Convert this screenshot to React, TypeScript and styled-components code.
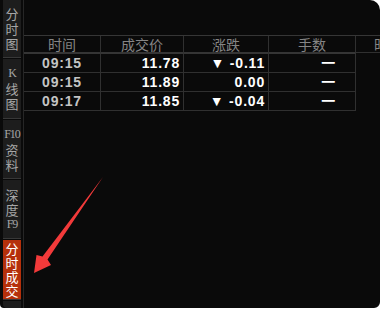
import * as React from 'react';
import styled, { createGlobalStyle } from 'styled-components';

const GlobalStyle = createGlobalStyle`
  html, body {
    margin: 0;
    padding: 0;
    background: #ffffff;
  }
`;

const Panel = styled.div`
  position: relative;
  display: flex;
  width: 380px;
  height: 308px;
  background: #0a0a0a;
  border-radius: 0 10px 6px 4px;
  overflow: hidden;
  font-family: 'Liberation Sans', 'Noto Sans CJK SC', sans-serif;
`;

const Sidebar = styled.div`
  display: flex;
  flex-direction: column;
  gap: 2px;
  width: 18px;
  padding: 0 2px 0 3px;
  border-right: 1px solid #262626;
`;

const Tab = styled.div<{ $active?: boolean; $h: number }>`
  display: flex;
  flex-direction: column;
  align-items: center;
  justify-content: center;
  height: ${p => p.$h}px;
  flex-shrink: 0;
  background: ${p => (p.$active ? '#b5300b' : '#1d1d1d')};
  color: ${p => (p.$active ? '#ffffff' : '#a6a6a6')};
  line-height: ${p => (p.$active ? 14 : 15)}px;
  box-shadow: 0 1px 0 #383838;
`;

const SideFill = styled.div`
  flex: 1;
  background: #1d1d1d;
  border-bottom-left-radius: 4px;
`;

const TabLine = styled.span<{ $latin?: boolean }>`
  display: block;
  font-family: ${p => (p.$latin ? "'Liberation Serif', serif" : "'Noto Sans CJK SC', sans-serif")};
  font-size: ${p => (p.$latin ? '12px' : '13px')};
  letter-spacing: ${p => (p.$latin ? '-1px' : '0')};
  white-space: nowrap;
`;

const Main = styled.div`
  flex: 1;
  min-width: 0;
  padding-top: 35px;
  overflow: hidden;
`;

const Table = styled.div`
  display: grid;
  grid-template-columns: 77px 83px 85px 87px 50px;
  width: max-content;
  border-top: 1px solid #363636;
`;

const HeadCell = styled.div<{ $last?: boolean }>`
  height: 16px;
  line-height: 17px;
  text-align: center;
  color: #858585;
  font-family: 'Noto Sans CJK SC', sans-serif;
  font-size: 14px;
  border-right: ${p => (p.$last ? 'none' : '1px solid #303030')};
  border-bottom: ${p => (p.$last ? '1px solid #303030' : '2px solid #353535')};
  white-space: nowrap;
`;

const Cell = styled.div<{ $align: 'center' | 'right'; $color: string; $pad?: number }>`
  height: 18px;
  line-height: 18px;
  text-align: ${p => p.$align};
  padding-right: ${p => p.$pad ?? 0}px;
  color: ${p => p.$color};
  font-size: 14px;
  font-weight: bold;
  letter-spacing: 0.8px;
  border-right: 1px solid #303030;
  border-bottom: 1px solid #303030;
  white-space: nowrap;
`;

const Empty = styled.div``;

const Arrow = styled.svg`
  position: absolute;
  left: 0;
  top: 0;
  pointer-events: none;
`;

const tabs = [
  { lines: ['分', '时', '图'], h: 57 },
  { lines: ['K', '线', '图'], h: 59 },
  { lines: ['F10', '资', '料'], h: 58 },
  { lines: ['深', '度', 'F9'], h: 58 },
  { lines: ['分', '时', '成', '交'], h: 59, active: true },
];

const rows = [
  { time: '09:15', price: '11.78', change: '▼ -0.11' },
  { time: '09:15', price: '11.89', change: '0.00' },
  { time: '09:17', price: '11.85', change: '▼ -0.04' },
];

const isLatin = (s: string) => /^[A-Za-z0-9]+$/.test(s);

export default function App() {
  return (
    <>
      <GlobalStyle />
      <Panel>
        <Sidebar>
          {tabs.map((t, i) => (
            <Tab key={i} $h={t.h} $active={t.active}>
              {t.lines.map((l, j) => (
                <TabLine key={j} $latin={isLatin(l)}>
                  {l}
                </TabLine>
              ))}
            </Tab>
          ))}
          <SideFill />
        </Sidebar>
        <Main>
          <Table>
            <HeadCell>时间</HeadCell>
            <HeadCell>成交价</HeadCell>
            <HeadCell>涨跌</HeadCell>
            <HeadCell>手数</HeadCell>
            <HeadCell $last>时</HeadCell>
            {rows.map((r, i) => (
              <React.Fragment key={i}>
                <Cell $align="center" $color="#c4c4c4">{r.time}</Cell>
                <Cell $align="right" $color="#ffffff" $pad={3}>{r.price}</Cell>
                <Cell $align="right" $color="#ffffff" $pad={3}>{r.change}</Cell>
                <Cell $align="right" $color="#ffffff" $pad={19}>一</Cell>
                <Empty />
              </React.Fragment>
            ))}
          </Table>
        </Main>
        <Arrow width="381" height="310">
          <polygon
            points="103,177 47.5,259.5 51,265 34,273 36.5,255 42.5,256.5"
            fill="#f23a3a"
          />
        </Arrow>
      </Panel>
    </>
  );
}
